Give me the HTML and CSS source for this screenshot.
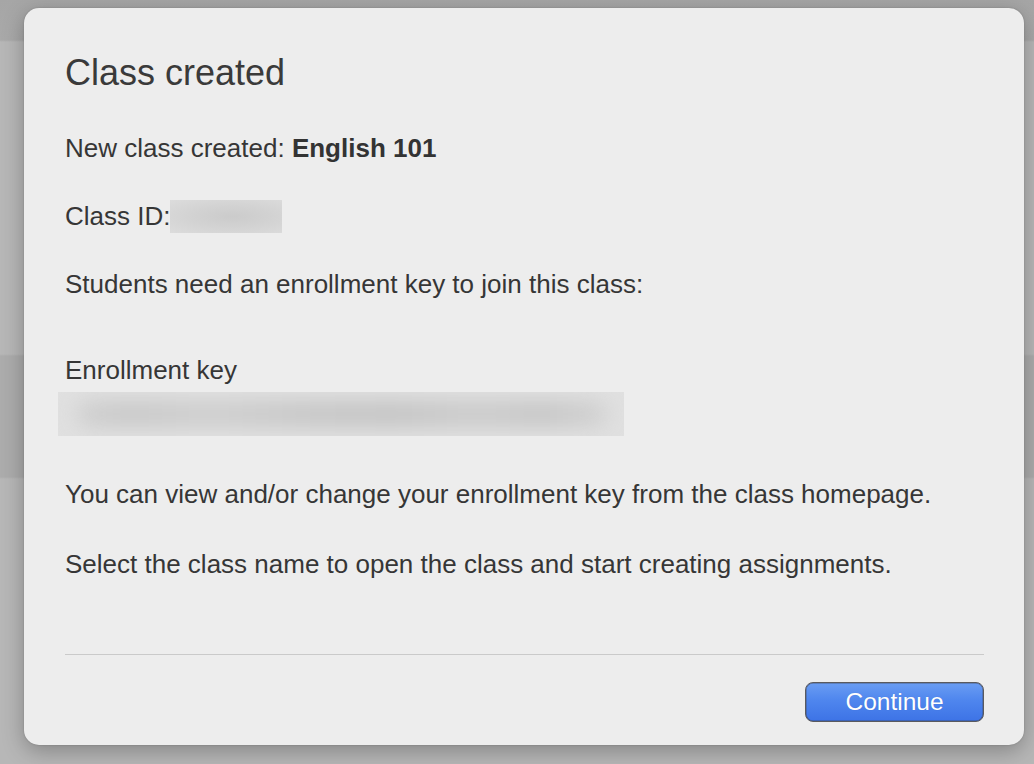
FILE: index.html
```html
<!DOCTYPE html>
<html lang="en">
<head>
<meta charset="utf-8">
<title>Class created</title>
<link rel="stylesheet" href="styles.css">
</head>
<body>
<div class="backdrop">
  <div class="dialog" role="dialog" aria-labelledby="dlg-title">
    <h1 class="dialog-title" id="dlg-title">Class created</h1>
    <p class="line first">New class created: <strong>English 101</strong></p>
    <p class="line">Class ID:<span class="redacted redacted-id"></span></p>
    <p class="line">Students need an enrollment key to join this class:</p>
    <p class="line label">Enrollment key</p>
    <div class="redacted-key"><span class="smear"></span></div>
    <p class="line after-key">You can view and/or change your enrollment key from the class homepage.</p>
    <p class="line">Select the class name to open the class and start creating assignments.</p>
    <div class="dialog-footer">
      <button class="btn-primary" type="button">Continue</button>
    </div>
  </div>
</div>
</body>
</html>
```

FILE: styles.css
```css
html, body {
  margin: 0;
  padding: 0;
  height: 100%;
}

body {
  font-family: "Liberation Sans", Arial, Helvetica, sans-serif;
  color: #363636;
  overflow: hidden;
}

/* dimmed page behind the modal */
.backdrop {
  height: 764px;
  box-sizing: border-box;
  padding: 8px 10px 0 24px;
  background:
    linear-gradient(to bottom,
      #a6a6a6 0, #a9a9a9 40px,
      #b7b7b7 42px, #b7b7b7 354px,
      #acacac 356px, #acacac 477px,
      #b7b7b7 479px, #b7b7b7 100%);
}

.dialog {
  width: 1000px;
  height: 737px;
  box-sizing: border-box;
  background: #ededed;
  border-radius: 15px;
  box-shadow: 0 6px 22px rgba(0, 0, 0, 0.28), 0 0 2px rgba(0, 0, 0, 0.2);
  padding: 45px 40px 0 41px;
  display: flex;
  flex-direction: column;
}

.dialog-title {
  margin: 0;
  font-size: 36px;
  font-weight: normal;
  line-height: 40px;
  color: #3a3a3a;
}

.line {
  margin: 0;
  font-size: 26px;
  line-height: 30px;
  height: 30px;
  white-space: nowrap;
}

.line strong {
  font-weight: bold;
  color: #333;
}

.first { margin-top: 40px; }
.line + .line { margin-top: 38px; }
.line.label { margin-top: 56px; }
.line.after-key { margin-top: 43px; }
.line.after-key + .line { margin-top: 40px; }

.redacted {
  display: inline-block;
  vertical-align: top;
  margin-top: -1px;
  background: radial-gradient(ellipse at 55% 50%, #cbcbcb 0, #d2d2d2 45%, #dcdcdc 100%);
}

.redacted-id {
  width: 112px;
  height: 33px;
}

.redacted-key {
  margin: 7px 0 0 -7px;
  width: 566px;
  height: 44px;
  background: #e0e0e0;
  overflow: hidden;
  position: relative;
}

.smear {
  display: block;
  margin: 9px 16px 0 18px;
  height: 26px;
  border-radius: 13px;
  background: linear-gradient(to right,
    #d0d0d0 0, #c8c8c8 10%, #cecece 25%, #c6c6c6 45%, #c4c4c4 60%,
    #cbcbcb 75%, #c6c6c6 88%, #d2d2d2 100%);
  filter: blur(10px);
}

.dialog-footer {
  margin-top: 75px;
  border-top: 1.5px solid #cacaca;
  padding-top: 27px;
  display: flex;
  justify-content: flex-end;
}

.btn-primary {
  width: 179px;
  height: 40px;
  box-sizing: border-box;
  border: 1px solid #5a5a5e;
  box-shadow: inset 0 0 0 0.5px rgba(60, 60, 70, 0.6);
  border-radius: 8px;
  background: linear-gradient(to bottom, #6a9df3 0%, #4f86ee 45%, #3d73e6 100%);
  color: #fff;
  font-family: "Liberation Sans", Arial, Helvetica, sans-serif;
  font-size: 24.5px;
  line-height: 36px;
  padding: 0;
  text-shadow: 0 0 1px rgba(0, 0, 0, 0.15);
  cursor: default;
}
```
